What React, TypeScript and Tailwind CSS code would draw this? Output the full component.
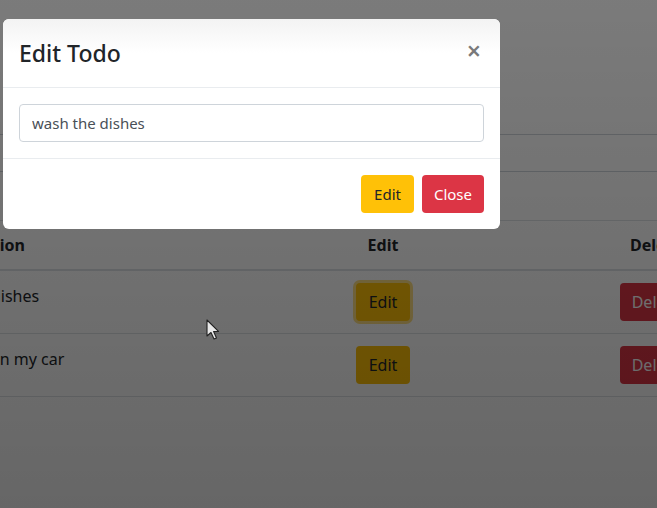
import React, { useState } from 'react';

const font = { fontFamily: '"Noto Sans", "Open Sans", sans-serif' };

const todos = [
  { id: 1, text: 'wash the dishes' },
  { id: 2, text: 'wash and clean my car' },
];

function Cursor() {
  return (
    <svg className="absolute left-[206px] top-[319px]" width="14" height="22" viewBox="0 0 14 22">
      <path d="M1 1 L1 17 L5 13.5 L8 20 L10.5 19 L7.6 12.6 L12.5 12.4 Z" fill="#e8e8e8" stroke="#222" strokeWidth="1.1" strokeLinejoin="round" />
    </svg>
  );
}

export default function App() {
  const [value, setValue] = useState('wash the dishes');

  return (
    <div className="relative w-[657px] h-[508px] overflow-hidden bg-white text-[#212529]" style={font}>
      {/* page behind the modal */}
      <div className="-ml-[251px] w-[1020px] pt-[134px]">
        <div className="ml-[200px] h-[38px] border border-[#ced4da] rounded"></div>
        <div className="mt-[48px]">
          <div className="grid grid-cols-[460px_348px_198px] border-t border-[#dee2e6] border-b-2 text-[16px] font-bold">
            <div className="py-3 leading-6 text-center">Description</div>
            <div className="py-3 leading-6 text-center">Edit</div>
            <div className="py-3 leading-6 text-center">Delete</div>
          </div>
          {todos.map((t, i) => (
            <div key={t.id} className="grid grid-cols-[460px_348px_198px] border-b border-[#dee2e6] text-[16px]">
              <div className="py-[13px] leading-6 text-center">{t.text}</div>
              <div className="py-3 flex justify-center">
                <button
                  className={`h-[38px] px-[13px] rounded bg-[#ffc107] text-[#212529] leading-6 ${i === 0 ? 'shadow-[0_0_0_3px_rgba(255,193,7,0.5)]' : ''}`}
                >
                  Edit
                </button>
              </div>
              <div className="py-3 flex justify-center">
                <button className="h-[38px] px-3 rounded bg-[#dc3545] text-white leading-6">Delete</button>
              </div>
            </div>
          ))}
        </div>
      </div>

      {/* backdrop */}
      <div className="absolute inset-0 bg-linear-to-b from-black/[0.52] to-black/[0.6]"></div>

      {/* modal */}
      <div className="absolute left-[3px] top-[19px] w-[497px] bg-white rounded-md overflow-hidden">
        <div className="h-[69px] px-4 flex items-center justify-between border-b border-[#e9ecef] bg-linear-to-b from-[#f3f3f3] to-white to-50%">
          <h4 className="text-[23px] font-medium leading-9 -mt-[1px]">Edit Todo</h4>
          <button className="text-[#7a7a7a] text-[25px] font-semibold leading-none pr-[3px] -mt-[6px]">×</button>
        </div>
        <div className="p-4 border-b border-[#e9ecef]">
          <input
            value={value}
            onChange={e => setValue(e.target.value)}
            className="w-full h-[38px] px-3 border border-[#ced4da] rounded text-[15px] text-[#495057] outline-none"
          />
        </div>
        <div className="h-[70px] px-4 flex items-center justify-end gap-2">
          <button className="h-[38px] px-[13px] rounded bg-[#ffc107] text-[#212529] text-[15px]">Edit</button>
          <button className="h-[38px] px-3 rounded bg-[#dc3545] text-white text-[15px]">Close</button>
        </div>
      </div>

      <Cursor />
    </div>
  );
}
